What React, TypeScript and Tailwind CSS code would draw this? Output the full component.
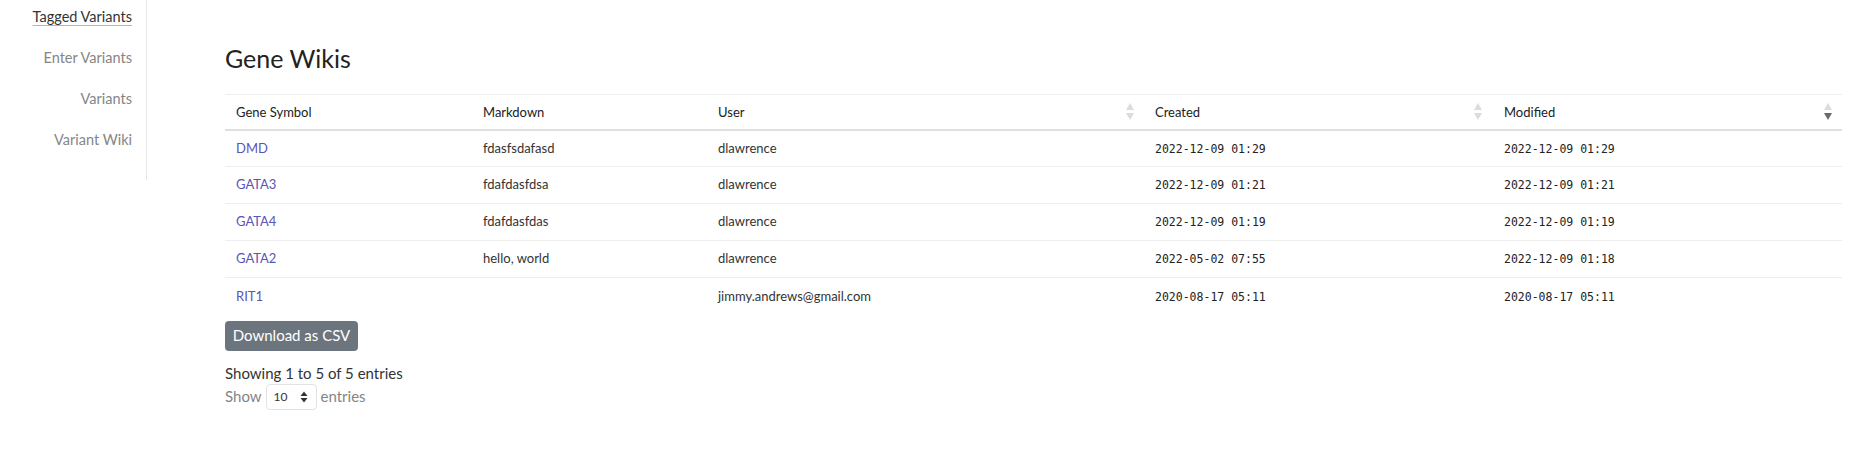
const rows = [
  { gene: 'DMD', md: 'fdasfsdafasd', user: 'dlawrence', created: '2022-12-09 01:29', modified: '2022-12-09 01:29' },
  { gene: 'GATA3', md: 'fdafdasfdsa', user: 'dlawrence', created: '2022-12-09 01:21', modified: '2022-12-09 01:21' },
  { gene: 'GATA4', md: 'fdafdasfdas', user: 'dlawrence', created: '2022-12-09 01:19', modified: '2022-12-09 01:19' },
  { gene: 'GATA2', md: 'hello, world', user: 'dlawrence', created: '2022-05-02 07:55', modified: '2022-12-09 01:18' },
  { gene: 'RIT1', md: '', user: 'jimmy.andrews@gmail.com', created: '2020-08-17 05:11', modified: '2020-08-17 05:11' },
]

const SortIcon = ({ active = false }: { active?: boolean }) => (
  <svg width="8" height="18" viewBox="0 0 8 18" className="shrink-0">
    <path d="M4 0 L8 7 L0 7 Z" fill="#dcdcdc" />
    <path d="M0 10 L8 10 L4 17 Z" fill={active ? '#6b6b6b' : '#dcdcdc'} />
  </svg>
)

const navItems = ['Tagged Variants', 'Enter Variants', 'Variants', 'Variant Wiki']

export default function App() {
  return (
    <div className="flex min-h-[468px] bg-white font-['Lato','Open_Sans',sans-serif] text-[#333]">
      <nav className="flex h-[180px] w-[147px] shrink-0 flex-col items-end border-r border-[#e6e6e6] pr-[14px] pt-[6px] text-[14.5px]">
        {navItems.map((item, i) => (
          <a
            key={item}
            className={
              i === 0
                ? 'h-[41px] text-[#333] underline decoration-[#b5b5b5] underline-offset-[3px]'
                : 'h-[41px] text-[#858585]'
            }
          >
            {item}
          </a>
        ))}
      </nav>

      <main className="flex-1 pl-[78px] pr-[18px]">
        <h2 className="mt-[43px] mb-[20px] text-[25px] font-normal leading-[31px] text-[#222]">Gene Wikis</h2>

        <table className="w-full table-fixed border-collapse text-[13px]">
          <colgroup>
            <col className="w-[247px]" />
            <col className="w-[235px]" />
            <col className="w-[437px]" />
            <col className="w-[349px]" />
            <col />
          </colgroup>
          <thead>
            <tr className="h-[35px] border-t border-b-2 border-t-[#eeeeee] border-b-[#dde1e6] text-left text-[#222]">
              <th className="px-[11px] pt-[1px] font-normal">Gene Symbol</th>
              <th className="px-[11px] pt-[1px] font-normal">Markdown</th>
              <th className="pl-[11px] pr-[10px] pt-[1px] font-normal">
                <div className="flex items-center justify-between">
                  <span>User</span>
                  <SortIcon />
                </div>
              </th>
              <th className="pl-[11px] pr-[11px] pt-[1px] font-normal">
                <div className="flex items-center justify-between">
                  <span>Created</span>
                  <SortIcon />
                </div>
              </th>
              <th className="pl-[11px] pr-[10px] pt-[1px] font-normal">
                <div className="flex items-center justify-between">
                  <span>Modified</span>
                  <SortIcon active />
                </div>
              </th>
            </tr>
          </thead>
          <tbody>
            {rows.map((r, i) => (
              <tr key={r.gene} className={i === 0 ? 'h-[37px]' : 'h-[37px] border-t border-[#eeeeee]'}>
                <td className="px-[11px] text-[#5b54b4]">{r.gene}</td>
                <td className="px-[11px]">{r.md}</td>
                <td className="px-[11px]">{r.user}</td>
                <td className="px-[11px] pt-[2px] font-['DejaVu_Sans_Mono',monospace] text-[11.5px] text-[#222]">{r.created}</td>
                <td className="px-[11px] pt-[2px] font-['DejaVu_Sans_Mono',monospace] text-[11.5px] text-[#222]">{r.modified}</td>
              </tr>
            ))}
          </tbody>
        </table>

        <button className="mt-[6px] h-[30px] w-[133px] rounded-[4px] bg-[#6c757d] text-[15px] text-white">
          Download as CSV
        </button>

        <div className="mt-[11px] text-[15px] leading-[22px] text-[#333]">Showing 1 to 5 of 5 entries</div>
        <div className="flex items-center gap-[4px] text-[15px] text-[#858585]">
          <span>Show</span>
          <div className="flex h-[26px] w-[51px] items-center justify-between rounded-[4px] border border-[#e3e3e3] pl-[7px] pr-[8px] text-[12px] text-[#333]">
            <span>10</span>
            <svg width="8" height="12" viewBox="0 0 8 12">
              <path d="M4 0.5 L7.5 5 L0.5 5 Z" fill="#333" />
              <path d="M0.5 7 L7.5 7 L4 11.5 Z" fill="#333" />
            </svg>
          </div>
          <span>entries</span>
        </div>
      </main>
    </div>
  )
}
